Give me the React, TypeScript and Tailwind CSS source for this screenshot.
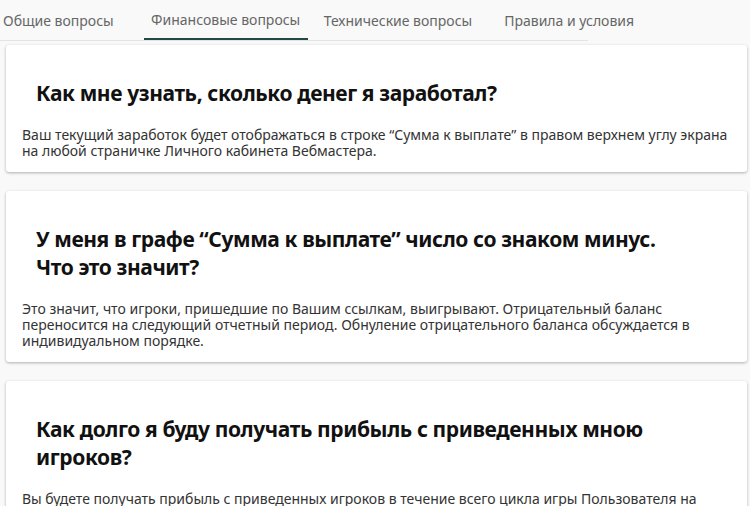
import React from "react";

const cards = [
  {
    q: "Как мне узнать, сколько денег я заработал?",
    a: "Ваш текущий заработок будет отображаться в строке “Сумма к выплате” в правом верхнем углу экрана на любой страничке Личного кабинета Вебмастера.",
  },
  {
    q: "У меня в графе “Сумма к выплате” число со знаком минус. Что это значит?",
    a: "Это значит, что игроки, пришедшие по Вашим ссылкам, выигрывают. Отрицательный баланс переносится на следующий отчетный период. Обнуление отрицательного баланса обсуждается в индивидуальном порядке.",
  },
  {
    q: "Как долго я буду получать прибыль с приведенных мною игроков?",
    a: "Вы будете получать прибыль с приведенных игроков в течение всего цикла игры Пользователя на Партнерском Проекте. Простыми словами, Вы зарабатываете, пока они играют.",
  },
];

const tabs = ["Общие вопросы", "Финансовые вопросы", "Технические вопросы", "Правила и условия"];

export default function App() {
  return (
    <div className="w-[750px] h-[506px] overflow-hidden bg-[#f9f9f9] font-['Liberation_Sans_Narrow','Liberation_Sans',sans-serif]">
      <div className="flex w-[588px] border-b border-[#e3e3e3] h-[41px] items-stretch">
        {tabs.map((t, i) => (
          <div
            key={t}
            className={`flex items-center justify-center whitespace-nowrap text-[14px] text-[#666] ${
              i === 0 ? "pl-[3px] pr-[30px]" : "px-[16px]"
            } ${i === 1 ? "w-[164px] border-b-2 border-[#1f4a45]" : ""}`}
          >
            {t}
          </div>
        ))}
      </div>
      <div className="flex flex-col gap-[19px] pl-[6px] pr-[3px] pt-[4px]">
        {cards.map((c) => (
          <div key={c.q} className="bg-white rounded-[3px] shadow-[0_1px_3px_rgba(0,0,0,0.3)] pt-[34px] pb-[13px] px-[16px]">
            <h2 className="pl-[14px] pr-[60px] font-['Liberation_Sans',sans-serif] text-[21px] leading-[28px] font-bold text-[#111] tracking-[-0.4px]">{c.q}</h2>
            <p className="mt-[20px] text-[14px] leading-[16px] text-[#333]">{c.a}</p>
          </div>
        ))}
      </div>
    </div>
  );
}
